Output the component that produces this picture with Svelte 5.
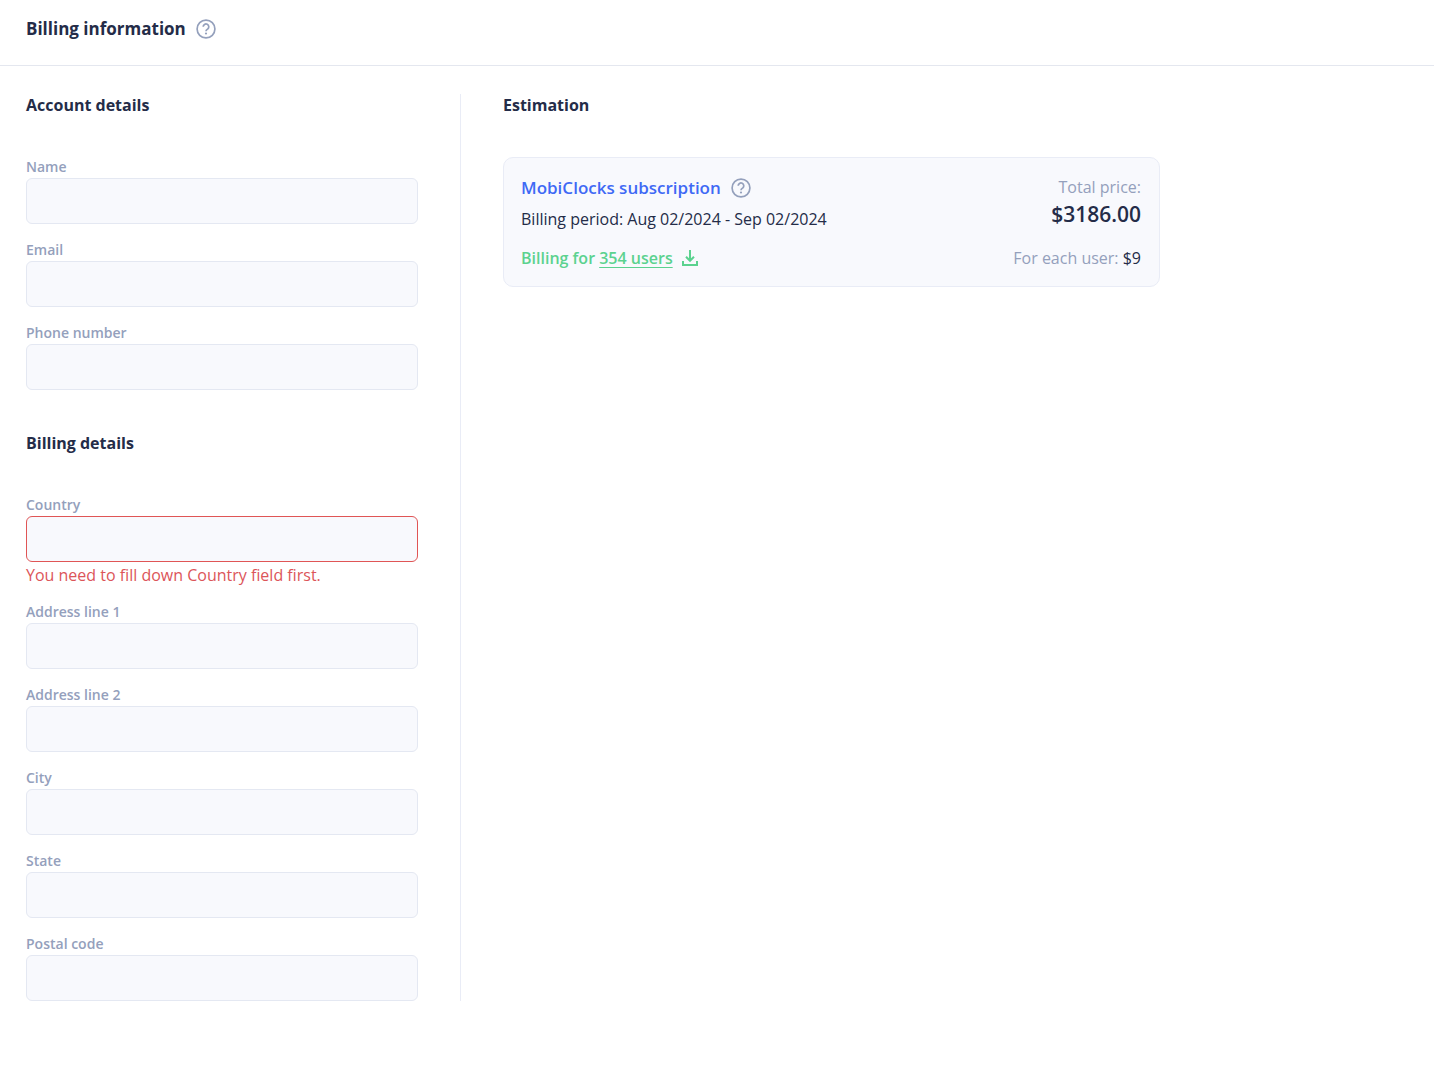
<script>
  const accountFields = [
    { id: 'name', label: 'Name', type: 'text' },
    { id: 'email', label: 'Email', type: 'email' },
    { id: 'phone', label: 'Phone number', type: 'tel' },
  ];

  const billingFields = [
    { id: 'country', label: 'Country', type: 'text', error: 'You need to fill down Country field first.' },
    { id: 'address1', label: 'Address line 1', type: 'text' },
    { id: 'address2', label: 'Address line 2', type: 'text' },
    { id: 'city', label: 'City', type: 'text' },
    { id: 'state', label: 'State', type: 'text' },
    { id: 'postal', label: 'Postal code', type: 'text' },
  ];

  let values = $state({});
</script>

{#snippet helpButton(label)}
  <button class="help" type="button" aria-label={label}>
    <svg viewBox="0 0 20 20" width="20" height="20" fill="none" stroke="currentColor" aria-hidden="true">
      <circle cx="10" cy="10" r="8.9" stroke-width="1.7" />
      <path d="M7.2 7.8a2.8 2.8 0 1 1 4.5 2.2c-1 .7-1.7 1.1-1.7 2.3" stroke-width="1.7" />
      <circle cx="10" cy="14.5" r="1.1" fill="currentColor" stroke="none" />
    </svg>
  </button>
{/snippet}

{#snippet fieldGroup(title, fields)}
  <section class="group">
    <h2>{title}</h2>
    <div class="fields">
      {#each fields as field (field.id)}
        <div class="field">
          <label for={field.id}>{field.label}</label>
          <input
            id={field.id}
            type={field.type}
            class:invalid={field.error}
            aria-invalid={field.error ? 'true' : undefined}
            aria-describedby={field.error ? `${field.id}-error` : undefined}
            bind:value={values[field.id]}
          />
          {#if field.error}
            <p class="error" id="{field.id}-error">{field.error}</p>
          {/if}
        </div>
      {/each}
    </div>
  </section>
{/snippet}

<header class="top">
  <h1>Billing information</h1>
  {@render helpButton('About billing information')}
</header>

<main>
  <form class="details">
    {@render fieldGroup('Account details', accountFields)}
    {@render fieldGroup('Billing details', billingFields)}
  </form>

  <section class="estimation">
    <h2>Estimation</h2>
    <article class="card">
      <div class="plan">
        <div class="plan-title">
          <h3>MobiClocks subscription</h3>
          {@render helpButton('About the subscription')}
        </div>
        <p class="period">Billing period: Aug 02/2024 - Sep 02/2024</p>
        <p class="users">
          <span>Billing for <a href="#users">354 users</a></span>
          <button class="download" type="button" aria-label="Download user list">
            <svg viewBox="0 0 16 16" width="16" height="16" fill="none" stroke="currentColor" stroke-width="2" aria-hidden="true">
              <path d="M8 0v10.4M4 6.8l4 4 4-4M1 11v4h14v-4" />
            </svg>
          </button>
        </p>
      </div>
      <div class="price">
        <p class="muted">Total price:</p>
        <p class="total">$3186.00</p>
        <p class="each"><span class="muted">For each user:</span> $9</p>
      </div>
    </article>
  </section>
</main>

<style>
  :global(body) {
    background: #fff;
    color: #242c48;
    font-family: 'Open Sans', 'Noto Sans', sans-serif;
    font-size: 16px;
    line-height: 24px;
  }

  h1,
  h2,
  h3,
  p {
    margin: 0;
  }

  button {
    display: flex;
    padding: 0;
    border: 0;
    background: none;
    cursor: pointer;
  }

  .top {
    display: flex;
    align-items: center;
    gap: 10px;
    padding: 16px 26px 23px;
    border-bottom: 1px solid #e4e7ef;
  }

  h1 {
    font-size: 17px;
    font-weight: 700;
    line-height: 26px;
  }

  h2 {
    font-size: 16px;
    font-weight: 700;
    line-height: 22px;
  }

  .help {
    color: #94a0bc;
  }

  main {
    display: flex;
    padding: 28px 26px 87px;
  }

  .details {
    flex: 0 1 435px;
    box-sizing: border-box;
    display: flex;
    flex-direction: column;
    gap: 42px;
    padding-right: 42px;
    border-right: 1px solid #e9ecf6;
  }

  .group {
    display: flex;
    flex-direction: column;
    gap: 41px;
  }

  .fields {
    display: flex;
    flex-direction: column;
    gap: 16px;
  }

  .field {
    display: flex;
    flex-direction: column;
  }

  label {
    padding-bottom: 1px;
    color: #94a0bc;
    font-size: 14px;
    font-weight: 600;
    line-height: 20px;
  }

  input {
    box-sizing: border-box;
    width: 100%;
    height: 46px;
    padding: 0 14px;
    border: 1px solid #e4e8f2;
    border-radius: 6px;
    background: #f8f9fd;
    color: inherit;
    font: inherit;
  }

  input.invalid {
    border-color: #e05555;
  }

  .error {
    padding-top: 2px;
    color: #dc5559;
    line-height: 22px;
  }

  .estimation {
    flex: 1;
    display: flex;
    flex-direction: column;
    gap: 41px;
    padding-left: 42px;
  }

  .card {
    box-sizing: border-box;
    display: flex;
    justify-content: space-between;
    gap: 24px;
    width: 100%;
    max-width: 657px;
    padding: 17px 18px 16px 17px;
    border: 1px solid #e9ecf6;
    border-radius: 10px;
    background: #f8f9fd;
  }

  .plan-title {
    display: flex;
    align-items: center;
    gap: 10px;
  }

  .users {
    display: flex;
    align-items: center;
    gap: 9px;
  }

  h3 {
    color: #3f69f5;
    font-size: 17px;
    font-weight: 600;
    line-height: 26px;
  }

  .period {
    margin: 6px 0 15px;
  }

  .users,
  .users a,
  .download {
    color: #5bd28f;
    font-weight: 600;
  }

  .users a {
    text-decoration-thickness: 1px;
    text-underline-offset: 3px;
  }

  .price {
    text-align: right;
  }

  .muted {
    color: #94a0bc;
  }

  .total {
    margin: 1px 0 18px;
    font-size: 21px;
    font-weight: 600;
    line-height: 28px;
  }

  @media (max-width: 900px) {
    main {
      flex-direction: column;
      gap: 42px;
    }

    .details {
      flex: none;
      padding-right: 0;
      border-right: 0;
    }

    .estimation {
      padding-left: 0;
    }
  }
</style>
